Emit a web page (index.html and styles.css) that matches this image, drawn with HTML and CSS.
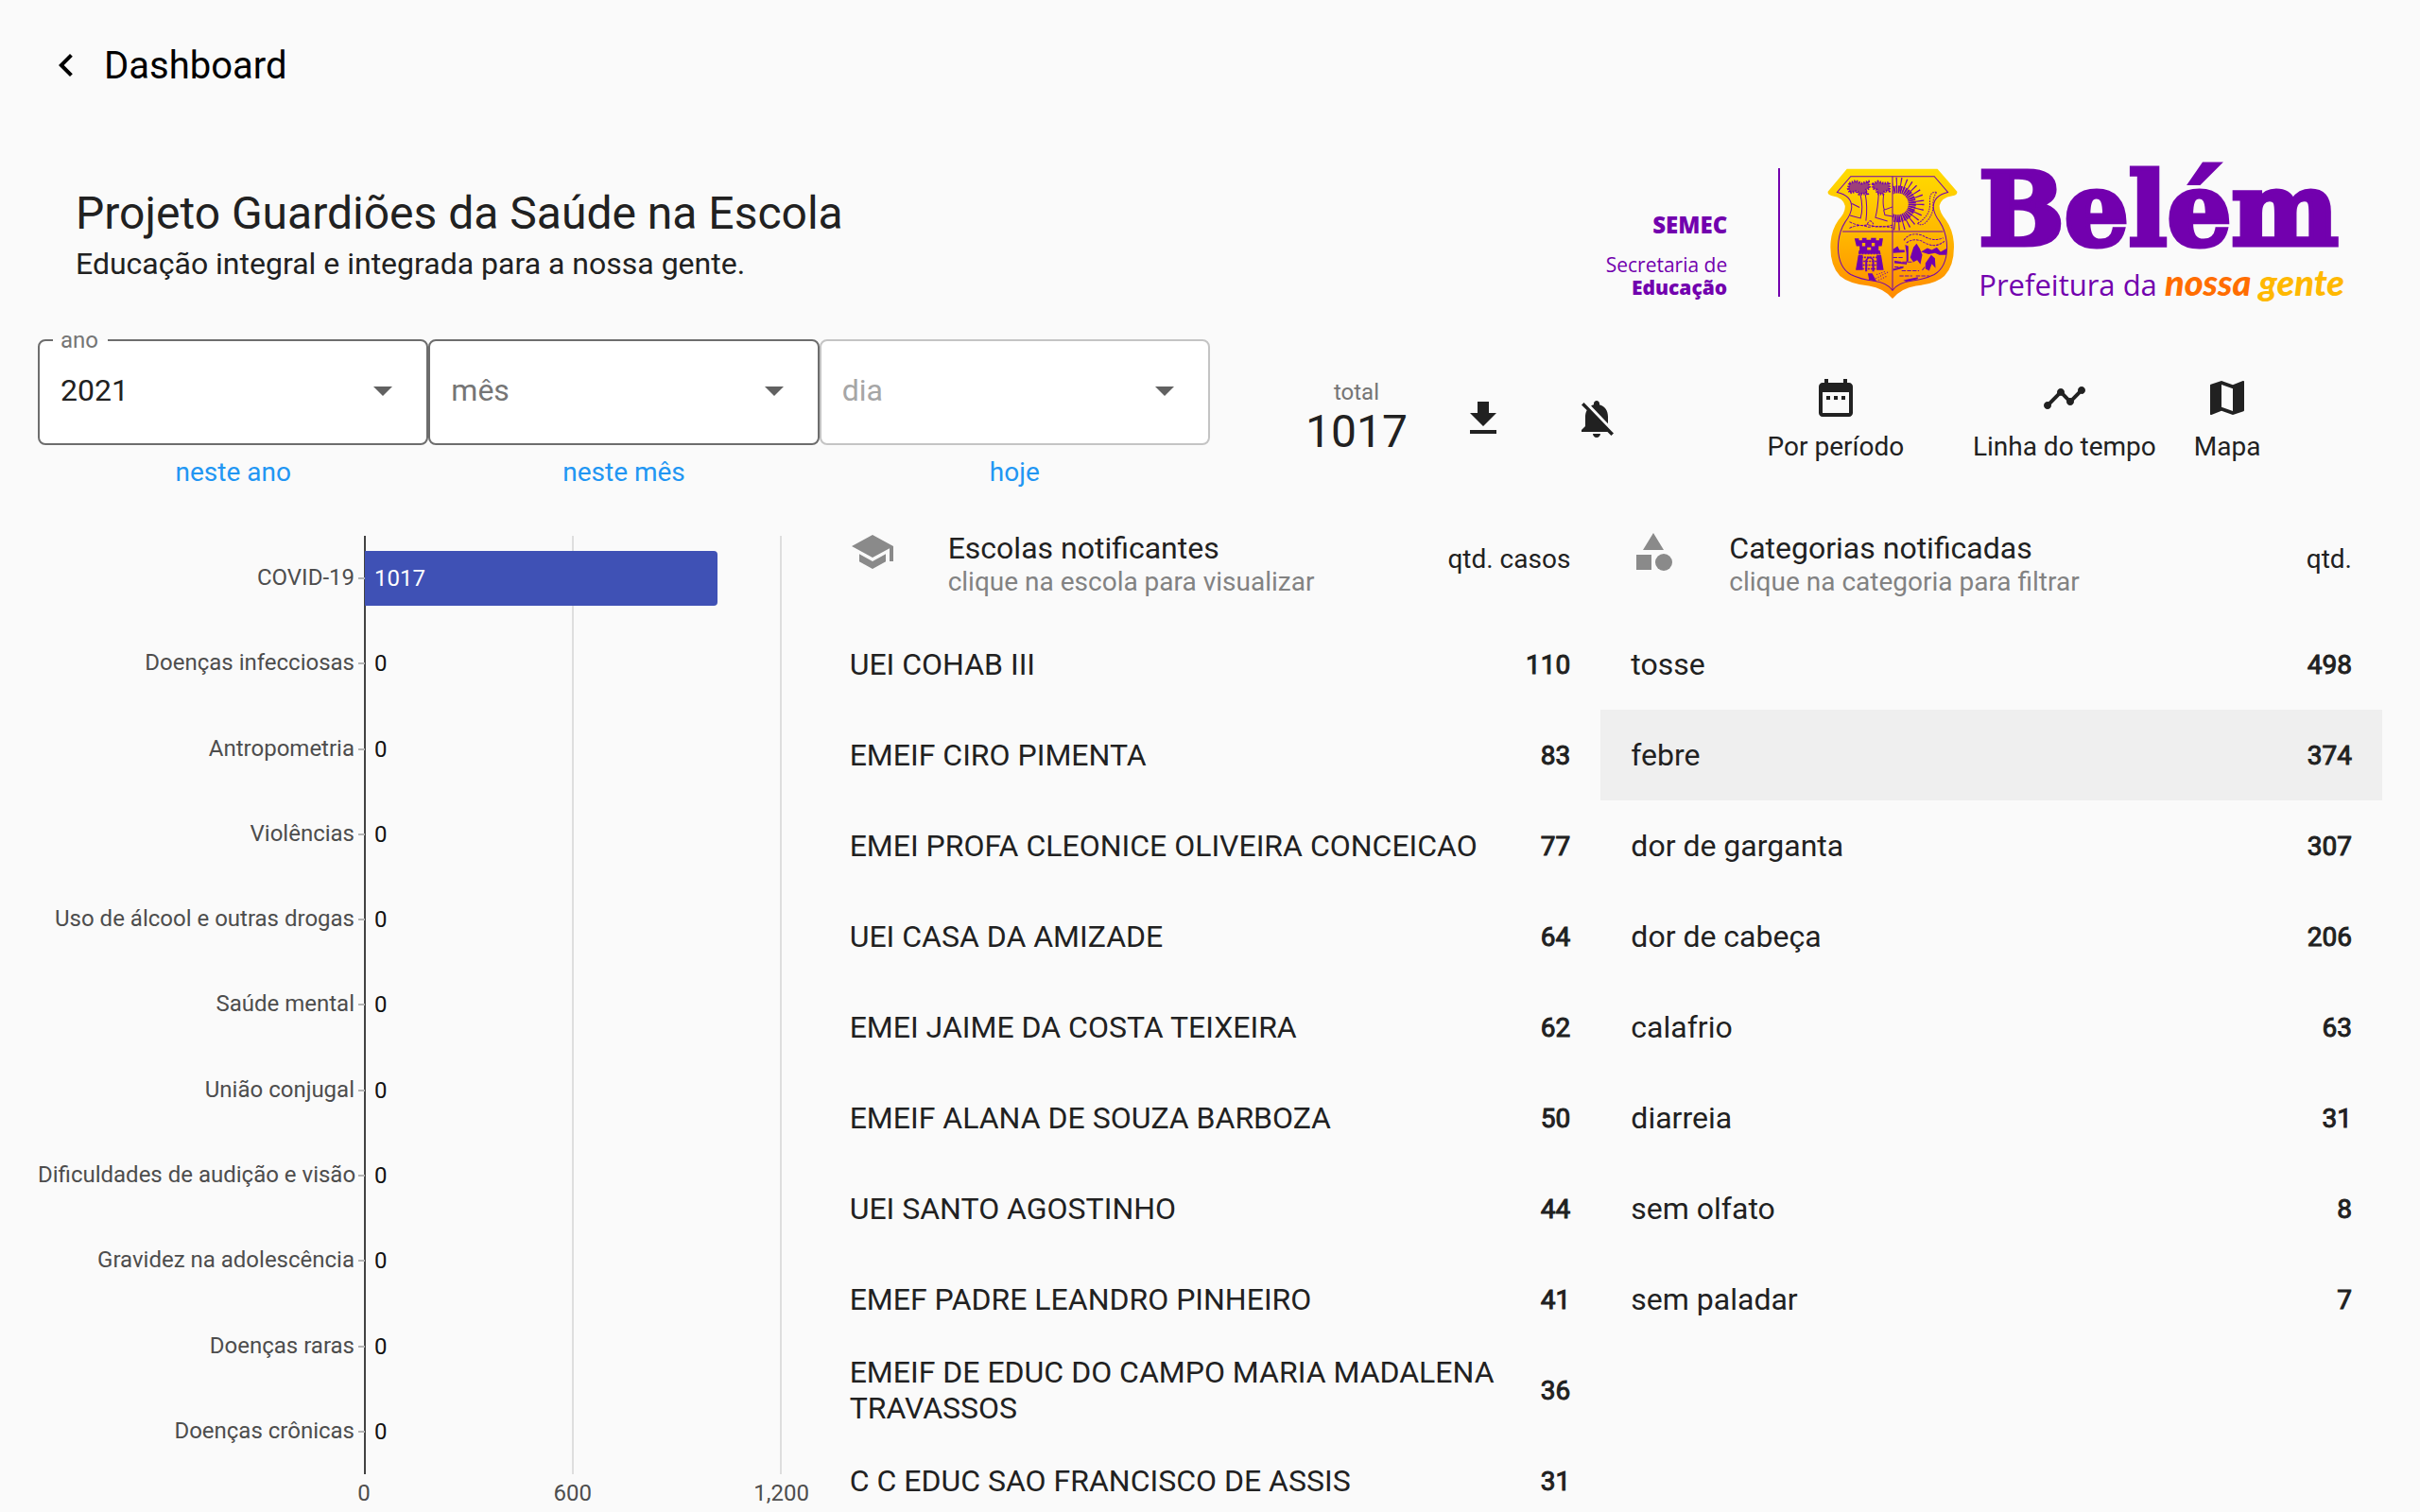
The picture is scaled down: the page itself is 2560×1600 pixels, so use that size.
FILE: index.html
```html
<!DOCTYPE html>
<html lang="pt-BR">
<head>
<meta charset="utf-8">
<meta name="viewport" content="width=device-width, initial-scale=1">
<title>Dashboard</title>
<link rel="stylesheet" href="styles.css">
</head>
<body>
<header class="appbar">
  <button class="icon-button back" type="button" aria-label="Voltar">
    <svg class="icon" viewBox="0 0 24 24"><path d="M15.41 7.41L14 6l-6 6 6 6 1.41-1.41L10.83 12z"/></svg>
  </button>
  <h1 class="appbar-title">Dashboard</h1>
</header>
<main class="page">
  <section class="hero">
    <div class="hero-text">
      <h2 class="hero-title">Projeto Guardiões da Saúde na Escola</h2>
      <p class="hero-subtitle">Educação integral e integrada para a nossa gente.</p>
    </div>
    <div class="brand">
      <div class="dept">
        <strong class="dept-code">SEMEC</strong>
        <span class="dept-line">Secretaria de</span>
        <strong class="dept-name">Educação</strong>
      </div>
      <svg class="shield" viewBox="50 26 412 412" aria-hidden="true">
        <defs>
          <linearGradient id="gold" x1="0" y1="0" x2="0" y2="1">
            <stop offset="0" stop-color="#ffdc00"/><stop offset="0.5" stop-color="#ffb800"/><stop offset="1" stop-color="#ff8a00"/>
          </linearGradient>
          <clipPath id="east"><path d="M257 53H375V222H257z"/></clipPath>
        </defs>
        <path fill="url(#gold)" d="M112 28H398L460 100Q462 111 445 113Q410 118 404 145Q404 165 425 190Q450 225 450 275Q450 335 420 366Q395 390 330 398Q285 405 256 438Q227 405 182 398Q117 390 90 366Q60 335 60 275Q60 225 85 190Q108 165 106 145Q100 118 65 113Q50 110 52 100Z"/>
        <g fill="none" stroke="#7200ae" stroke-width="3">
          <path d="M124 52H388L431 102Q385 112 385 150Q387 172 405 195Q428 230 428 280Q426 340 388 362Q355 378 315 382Q272 388 256 412Q240 388 197 382Q157 378 124 362Q86 340 84 280Q84 230 107 195Q125 172 127 150Q127 112 81 102Z"/>
          <path d="M256 52V412M98 226H416"/>
          <path d="M154 108Q165 150 155 184L122 175M170 108Q178 150 172 192M152 150L128 138M212 108Q210 150 202 182L240 193M228 108Q224 140 230 158L256 148M228 158L232 174L256 178"/>
          <path d="M120 195Q150 212 178 204Q215 218 256 205M120 216Q150 200 180 212Q220 206 256 214M176 204Q184 182 196 203" stroke-dasharray="9 3"/>
          <path d="M395 102Q372 98 374 132Q376 165 356 184Q346 196 334 200Q350 212 366 192Q386 170 384 140Q384 118 395 102" stroke-dasharray="5 3"/>
          <path d="M292 254Q310 226 350 238Q385 260 416 246M300 262Q320 246 348 256Q385 280 412 262M372 268Q398 276 420 256" stroke-dasharray="8 3"/>
          <path d="M258 308H292M270 322H322M262 338H290M285 350H340M278 366H318M330 366H372M350 348L368 326M298 330L304 314" stroke-dasharray="13 4"/>
          <path d="M150 296H218M148 308H218M146 320H220M144 332H222M142 344H224" stroke-width="5" stroke-dasharray="6 3"/>
          <path d="M196 378L246 352M212 380L240 366M206 362L234 352" stroke-dasharray="3 5"/>
        </g>
        <g clip-path="url(#east)" fill="none" stroke="#7200ae">
          <circle cx="272" cy="139" r="46" stroke-width="24" stroke-dasharray="5 2"/>
          <circle cx="272" cy="139" r="62" stroke-width="44" stroke-dasharray="3 10"/>
        </g>
        <g fill="#7200ae" fill-opacity="0.7" stroke="#7200ae" stroke-width="8" stroke-dasharray="4 4">
          <path d="M120 74L140 66L158 74L180 68L184 88L170 96L176 106L150 108L144 98L122 104L116 90Z"/>
          <path d="M194 76L210 68L228 74L246 72L246 98L232 98L226 108L208 106L206 94L194 90Z"/>
        </g>
        <g fill="#7200ae">
          <path d="M136 248H150V254H160V246H174V252H188V246H204V254H214V248H226L222 272H212V286H152V272H142Z"/>
          <path d="M150 286H216L218 296H148ZM140 346L148 300H162V348H140ZM206 300H220L228 348H206Z"/>
          <path fill="#ffb000" d="M160 262H170V272H160ZM190 262H200V272H190ZM176 276H188V284H176Z"/>
          <path d="M170 352V316Q184 294 198 316V352H192V316Q184 304 176 316V352ZM178 358H192L206 384L182 378Z"/>
          <path d="M258 282L272 272L278 284L294 284V292L258 294ZM346 290L366 278L380 284L396 276L408 290L426 280V300H404L390 294L370 298Z"/>
          <path d="M296 268L306 272V320H300V296ZM322 276L332 264L342 280L350 300L344 330L334 316L322 322L312 308ZM360 326L378 300L390 310L392 342L380 328L372 350L360 344Z"/>
          <path d="M258 344L290 336V342L258 350ZM290 380L336 370V376L300 384ZM262 318L300 326V330L262 326Z"/>
        </g>
      </svg>
      <div class="city">
        <strong class="city-name">Belém</strong>
        <span class="city-tag">Prefeitura da <em class="tag-orange">nossa</em> <em class="tag-yellow">gente</em></span>
      </div>
    </div>
  </section>

  <section class="toolbar">
    <div class="filters">
      <div class="filter">
        <div class="field">
          <label class="field-label" for="ano">ano</label>
          <select class="field-select" id="ano"><option>2021</option><option>2020</option></select>
          <svg class="field-arrow" viewBox="0 0 20 10"><path d="M0 0h20L10 10z"/></svg>
        </div>
        <button class="text-button" type="button">neste ano</button>
      </div>
      <div class="filter">
        <div class="field">
          <select class="field-select is-empty" aria-label="mês"><option>mês</option></select>
          <svg class="field-arrow" viewBox="0 0 20 10"><path d="M0 0h20L10 10z"/></svg>
        </div>
        <button class="text-button" type="button">neste mês</button>
      </div>
      <div class="filter">
        <div class="field is-disabled">
          <select class="field-select" aria-label="dia" disabled><option>dia</option></select>
          <svg class="field-arrow" viewBox="0 0 20 10"><path d="M0 0h20L10 10z"/></svg>
        </div>
        <button class="text-button" type="button">hoje</button>
      </div>
    </div>
    <div class="actions">
      <div class="total"><span class="total-label">total</span><span class="total-value">1017</span></div>
      <button class="icon-button" type="button" aria-label="Baixar">
        <svg class="icon" viewBox="0 0 24 24"><path d="M19 9h-4V3H9v6H5l7 7 7-7zM5 18v2h14v-2H5z"/></svg>
      </button>
      <button class="icon-button" type="button" aria-label="Notificações desativadas">
        <svg class="icon" viewBox="0 0 24 24"><path d="M20 18.69L7.84 6.14 5.27 3.49 4 4.76l2.8 2.8v.01c-.52.99-.8 2.16-.8 3.42v5l-2 2v1h13.73l2 2L21 19.72l-1-1.03zM12 22c1.11 0 2-.89 2-2h-4c0 1.11.89 2 2 2zm6-7.32V11c0-3.08-1.64-5.64-4.5-6.32V4c0-.83-.67-1.5-1.5-1.5s-1.5.67-1.5 1.5v.68c-.15.03-.29.08-.42.12-.1.03-.2.07-.3.11h-.01c-.01 0-.01 0-.02.01-.23.09-.46.2-.68.31 0 0-.01 0-.01.01L18 14.68z"/></svg>
      </button>
      <nav class="views">
        <button class="view-button view-wide" type="button">
          <svg class="icon" viewBox="0 0 24 24"><path d="M9 11H7v2h2v-2zm4 0h-2v2h2v-2zm4 0h-2v2h2v-2zm2-7h-1V2h-2v2H8V2H6v2H5c-1.11 0-1.99.9-1.99 2L3 20c0 1.1.89 2 2 2h14c1.1 0 2-.9 2-2V6c0-1.1-.9-2-2-2zm0 16H5V9h14v11z"/></svg>
          Por período
        </button>
        <button class="view-button" type="button">
          <svg class="icon" viewBox="0 0 24 24"><path d="M23 8c0 1.1-.9 2-2 2-.18 0-.35-.02-.51-.07l-3.56 3.55c.05.16.07.34.07.52 0 1.1-.9 2-2 2s-2-.9-2-2c0-.18.02-.36.07-.52l-2.55-2.55c-.16.05-.34.07-.52.07s-.36-.02-.52-.07l-4.55 4.56c.05.16.07.33.07.51 0 1.1-.9 2-2 2s-2-.9-2-2 .9-2 2-2c.18 0 .35.02.51.07l4.56-4.55C8.02 9.36 8 9.18 8 9c0-1.1.9-2 2-2s2 .9 2 2c0 .18-.02.36-.07.52l2.55 2.55c.16-.05.34-.07.52-.07s.36.02.52.07l3.55-3.56C19.02 8.35 19 8.18 19 8c0-1.1.9-2 2-2s2 .9 2 2z"/></svg>
          Linha do tempo
        </button>
        <button class="view-button" type="button">
          <svg class="icon" viewBox="0 0 24 24"><path d="M20.5 3l-.16.03L15 5.1 9 3 3.36 4.9c-.21.07-.36.25-.36.48V20.5c0 .28.22.5.5.5l.16-.03L9 18.9l6 2.1 5.64-1.9c.21-.07.36-.25.36-.48V3.5c0-.28-.22-.5-.5-.5zM15 19l-6-2.11V5l6 2.11V19z"/></svg>
          Mapa
        </button>
      </nav>
    </div>
  </section>

  <section class="columns">
    <div class="chart">
      <div class="plot">
        <div class="gridlines"></div>
        <ul class="bars">
          <li class="bar-row"><span class="bar-label">COVID-19</span><div class="bar-track"><div class="bar" style="width:84.75%">1017</div></div></li>
          <li class="bar-row"><span class="bar-label">Doenças infecciosas</span><div class="bar-track">0</div></li>
          <li class="bar-row"><span class="bar-label">Antropometria</span><div class="bar-track">0</div></li>
          <li class="bar-row"><span class="bar-label">Violências</span><div class="bar-track">0</div></li>
          <li class="bar-row"><span class="bar-label">Uso de álcool e outras drogas</span><div class="bar-track">0</div></li>
          <li class="bar-row"><span class="bar-label">Saúde mental</span><div class="bar-track">0</div></li>
          <li class="bar-row"><span class="bar-label">União conjugal</span><div class="bar-track">0</div></li>
          <li class="bar-row"><span class="bar-label">Dificuldades de audição e visão</span><div class="bar-track">0</div></li>
          <li class="bar-row"><span class="bar-label">Gravidez na adolescência</span><div class="bar-track">0</div></li>
          <li class="bar-row"><span class="bar-label">Doenças raras</span><div class="bar-track">0</div></li>
          <li class="bar-row"><span class="bar-label">Doenças crônicas</span><div class="bar-track">0</div></li>
        </ul>
      </div>
      <div class="axis"><span class="axis-label">0</span><span class="axis-label">600</span><span class="axis-label">1,200</span></div>
    </div>

    <section class="list">
      <header class="list-head">
        <svg class="icon list-icon" viewBox="0 0 24 24"><path d="M5 13.18v4L12 21l7-3.82v-4L12 17l-7-3.82zM12 3L1 9l11 6 9-4.91V17h2V9L12 3z"/></svg>
        <div class="list-heading">
          <h3 class="list-title">Escolas notificantes</h3>
          <p class="list-hint">clique na escola para visualizar</p>
        </div>
        <span class="list-unit">qtd. casos</span>
      </header>
      <table class="rows">
        <tr class="row"><td class="name">UEI COHAB III</td><td class="count">110</td></tr>
        <tr class="row"><td class="name">EMEIF CIRO PIMENTA</td><td class="count">83</td></tr>
        <tr class="row"><td class="name">EMEI PROFA CLEONICE OLIVEIRA CONCEICAO</td><td class="count">77</td></tr>
        <tr class="row"><td class="name">UEI CASA DA AMIZADE</td><td class="count">64</td></tr>
        <tr class="row"><td class="name">EMEI JAIME DA COSTA TEIXEIRA</td><td class="count">62</td></tr>
        <tr class="row"><td class="name">EMEIF ALANA DE SOUZA BARBOZA</td><td class="count">50</td></tr>
        <tr class="row"><td class="name">UEI SANTO AGOSTINHO</td><td class="count">44</td></tr>
        <tr class="row"><td class="name">EMEF PADRE LEANDRO PINHEIRO</td><td class="count">41</td></tr>
        <tr class="row"><td class="name">EMEIF DE EDUC DO CAMPO MARIA MADALENA TRAVASSOS</td><td class="count">36</td></tr>
        <tr class="row"><td class="name">C C EDUC SAO FRANCISCO DE ASSIS</td><td class="count">31</td></tr>
      </table>
    </section>

    <section class="list">
      <header class="list-head">
        <svg class="icon list-icon" viewBox="0 0 24 24"><path d="M12 2l-5.5 9h11zM3 13.5h8v8H3z"/><circle cx="17.5" cy="17.5" r="4.5"/></svg>
        <div class="list-heading">
          <h3 class="list-title">Categorias notificadas</h3>
          <p class="list-hint">clique na categoria para filtrar</p>
        </div>
        <span class="list-unit">qtd.</span>
      </header>
      <table class="rows">
        <tr class="row"><td class="name">tosse</td><td class="count">498</td></tr>
        <tr class="row is-hover"><td class="name">febre</td><td class="count">374</td></tr>
        <tr class="row"><td class="name">dor de garganta</td><td class="count">307</td></tr>
        <tr class="row"><td class="name">dor de cabeça</td><td class="count">206</td></tr>
        <tr class="row"><td class="name">calafrio</td><td class="count">63</td></tr>
        <tr class="row"><td class="name">diarreia</td><td class="count">31</td></tr>
        <tr class="row"><td class="name">sem olfato</td><td class="count">8</td></tr>
        <tr class="row"><td class="name">sem paladar</td><td class="count">7</td></tr>
      </table>
    </section>
  </section>
</main>
</body>
</html>
```
FILE: styles.css
```css
* { box-sizing: border-box; margin: 0; padding: 0; }

body {
  display: flex;
  flex-direction: column;
  height: 100vh;
  overflow: hidden;
  background: #fafafa;
  color: #212121;
  font-family: Roboto, "Liberation Sans", sans-serif;
  font-size: 32px;
  line-height: 38px;
}

button { border: 0; background: none; color: inherit; font: inherit; cursor: pointer; }
ul { list-style: none; }

.icon { display: block; width: 48px; height: 48px; fill: currentColor; }

/* App bar */
.appbar { display: flex; align-items: center; gap: 16px; height: 138px; padding: 0 46px; color: #000; }
.appbar-title { font-size: 40px; font-weight: 400; line-height: 48px; padding-top: 2px; }

.page { display: flex; flex: 1; flex-direction: column; min-height: 0; padding: 0 40px; }

/* Title and city brand */
.hero { display: flex; justify-content: space-between; height: 221px; padding: 40px 40px 0; }
.hero-title { margin-top: 19px; font-size: 48px; font-weight: 400; line-height: 58px; }
.hero-subtitle { line-height: 48px; }

.brand { display: flex; color: #7200ae; font-family: "Open Sans", "Noto Sans", sans-serif; }
.dept { display: flex; flex-direction: column; align-items: flex-end; height: 136px; padding: 48px 54px 0 0; border-right: 2px solid #7200ae; font-size: 21px; line-height: 24px; }
.dept-code { margin-bottom: 18px; font-size: 24px; font-weight: 800; }
.dept-name { font-weight: 800; }
.shield { width: 138px; height: 138px; margin: 0 22px 0 50px; }
.city { display: flex; flex-direction: column; }
.city-name { font-family: "DejaVu Serif", serif; font-size: 107px; font-weight: 700; line-height: 88px; -webkit-text-stroke: 5px #7200ae; }
.city-tag { padding-top: 12px; font-size: 31px; line-height: 40px; white-space: nowrap; }
.tag-orange, .tag-yellow { font-family: Lato, sans-serif; font-size: 38px; font-weight: 900; }
.tag-orange { color: #ff6d00; }
.tag-yellow { color: #ffb800; }

/* Filters and actions */
.toolbar { display: grid; grid-template-columns: 1fr 1fr; height: 181px; }
.filters { display: grid; grid-template-columns: repeat(3, 1fr); }
.filter { display: flex; flex-direction: column; align-items: center; gap: 8px; }
.field { position: relative; width: 100%; height: 112px; border: 2px solid #6d6d6d; border-radius: 8px; background: #fff; }
.field-select { width: 100%; height: 100%; padding: 0 22px 4px; border: 0; border-radius: 8px; background: none; appearance: none; color: #212121; font: inherit; opacity: 1; }
.field-select.is-empty { color: #757575; }
.field.is-disabled { border-color: #c4c4c4; }
.is-disabled .field-select { color: #a6a6a6; }
.field-label { position: absolute; top: -15px; left: 14px; padding: 0 10px 0 8px; background: linear-gradient(#fafafa 50%, #fff 50%); color: #757575; font-size: 24px; line-height: 28px; }
.field-arrow { position: absolute; top: 48px; right: 36px; width: 20px; height: 10px; fill: #616161; pointer-events: none; }
.text-button { color: #2196f3; font-size: 28px; line-height: 42px; }

.actions { display: flex; align-items: flex-start; gap: 40px; padding: 38px 0 0 101px; }
.total { display: flex; flex-direction: column; align-items: center; padding-top: 4px; }
.total-label { color: #757575; font-size: 24px; line-height: 28px; }
.total-value { font-size: 48px; line-height: 56px; }
.actions .icon-button { width: 80px; padding: 22px 16px; }
.views { display: flex; gap: 40px; margin-left: 68px; }
.view-button { display: flex; flex-direction: column; align-items: center; gap: 11px; font-size: 28px; line-height: 34px; white-space: nowrap; }
.view-wide { min-width: 210px; }

/* Three columns */
.columns { display: grid; flex: 1; grid-template-columns: repeat(3, 1fr); min-height: 0; }

.chart { display: flex; flex-direction: column; padding: 27px 40px 4px 0; color: #4d4d4d; font-size: 24px; line-height: 28px; }
.plot { position: relative; flex: 1; }
.gridlines { position: absolute; inset: 0 0 0 345px; border-right: 2px solid #dedede; border-left: 2px solid #424242; background: linear-gradient(#dedede, #dedede) center / 2px 100% no-repeat; }
.bars { position: relative; display: flex; flex-direction: column; height: 100%; }
.bar-row { display: flex; flex: 1; align-items: center; }
.bar-label { width: 346px; padding: 0 11px 2px 0; background: linear-gradient(#b5b5b5, #b5b5b5) right center / 7px 2px no-repeat; text-align: right; white-space: nowrap; }
.bar-track { flex: 1; color: #111; text-indent: 10px; }
.bar { height: 58px; border-radius: 0 4px 4px 0; background: #3f51b5; color: #fff; line-height: 58px; }
.axis { display: flex; justify-content: space-between; margin: 5px -40px 0 305px; line-height: 31px; }
.axis-label { width: 80px; text-align: center; }

.list { min-width: 0; overflow: hidden; }
.list-head { display: flex; height: 115px; padding: 20px 32px 0; }
.list-icon { margin-right: 56px; color: #8a8a8a; }
.list-heading { flex: 1; }
.list-title { font-size: 32px; font-weight: 400; line-height: 40px; }
.list-hint { color: #828282; font-size: 28px; line-height: 32px; }
.list-unit { font-size: 28px; line-height: 64px; }
.rows { width: 100%; border-collapse: collapse; }
.row { height: 96px; }
.is-hover { background: #efefef; }
.name { padding-left: 32px; }
.count { width: 112px; padding: 2px 32px 0 0; font-size: 28px; text-align: right; -webkit-text-stroke: 1px #212121; }
```
